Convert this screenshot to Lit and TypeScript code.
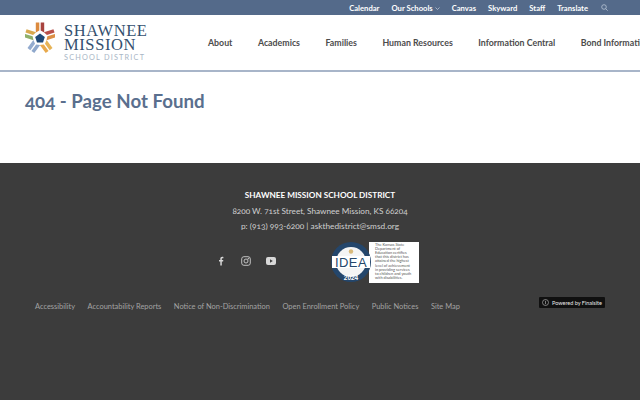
import { LitElement, html, css, svg } from "lit";
import { customElement } from "lit/decorators.js";

const arm = (rot: number, c1: string, c2: string) => svg`
  <g transform="rotate(${rot} 15 17)">
    <path d="M10.800 1.500H14.300V9.500L10.800 11.500z" fill=${c1}/>
    <path d="M15.700 1.500H19.200V11.500L15.700 9.500z" fill=${c2}/>
  </g>`;

@customElement("app-root")
export class AppRoot extends LitElement {
  static styles = css`
    :host { display: block; width: 640px; height: 400px; overflow: hidden; font-family: "Lato", "Open Sans", sans-serif; background: #fff; font-variant-numeric: oldstyle-nums; }
    .top { height: 15px; background: #546a8a; display: flex; justify-content: flex-end; align-items: center; padding-right: 32px; gap: 12px; color: #fff; font-size: 7.650px; font-weight: 700; }
    .top span { white-space: nowrap; }
    .chev { margin-left: 2px; vertical-align: 1px; }
    .search { margin-left: 1px; display: block; }
    .header { height: 55px; border-bottom: 2px solid #a8b5c9; display: flex; align-items: center; overflow: hidden; padding-left: 25px; }
    .logo { display: flex; gap: 9px; width: 183px; flex: none; align-items: flex-start; height: 55px; }
    .mark { margin-top: 6px; flex: none; }
    .wm { display: flex; flex-direction: column; font-family: "Liberation Serif", serif; color: #34506f; font-size: 16.500px; line-height: 13.500px; letter-spacing: .6px; padding-top: 9px; }
    .wm small { font-family: "Lato", sans-serif; font-size: 7.300px; letter-spacing: 1.200px; color: #a9b6c6; line-height: 10px; margin-top: 2px; white-space: nowrap; }
    nav { display: flex; gap: 25.500px; font-size: 8.800px; font-weight: 700; color: #4c4c4c; white-space: nowrap; }
    main { height: 91px; padding: 18px 25px 0; box-sizing: border-box; }
    h1 { margin: 0; font-size: 18.700px; line-height: 23px; font-weight: 700; color: #5a6f8e; }
    footer { height: 237px; background: #3c3c3c; color: #d0d0d0; position: relative; display: flex; flex-direction: column; align-items: center; padding-top: 26px; box-sizing: border-box; }
    .name { font-size: 8.200px; font-weight: 700; color: #fff; line-height: 12px; }
    .addr { font-size: 8.200px; line-height: 15px; margin-top: 3px; }
    .phone { font-size: 8.300px; line-height: 14px; }
    .mid { display: flex; align-items: center; align-self: flex-start; margin: 7px 0 0 216px; height: 44px; }
    .social { display: flex; gap: 15px; width: 115px; align-items: center; margin-top: -3px; }
    .badge { display: flex; align-items: center; }
    .disc { position: relative; z-index: 1; flex: none; }
    .note { width: 50px; height: 41px; background: #fff; color: #555; font-size: 3.900px; line-height: 4.200px; padding: 1px 5px 0 6px; box-sizing: border-box; margin-left: -2px; }
    .links { display: flex; align-self: flex-start; gap: 12.500px; margin: 17px 0 0 35px; font-size: 7.450px; color: #a3a3a3; white-space: nowrap; line-height: 12px; }
    .powered { position: absolute; left: 539px; top: 134px; width: 66px; height: 11px; background: #101010; border-radius: 1px; color: #e8e8e8; font-size: 5.500px; display: flex; align-items: center; gap: 3px; padding-left: 3px; box-sizing: border-box; white-space: nowrap; }
  `;

  render() {
    return html`
      <div class="top">
        <span>Calendar</span>
        <span>Our Schools<svg class="chev" width="5" height="3" viewBox="0 0 5 3"><path d="M.5.5 2.500 2.500 4.500.5" fill="none" stroke="#c8d2e0" stroke-width=".7"/></svg></span>
        <span>Canvas</span><span>Skyward</span><span>Staff</span><span>Translate</span>
        <svg class="search" width="7" height="7" viewBox="0 0 7 7"><circle cx="3" cy="3" r="2.300" fill="none" stroke="#b9c5d6" stroke-width=".8"/><path d="M4.700 4.700 6.700 6.700" stroke="#b9c5d6" stroke-width=".8"/></svg>
      </div>
      <div class="header">
        <div class="logo">
          <svg class="mark" width="30" height="33" viewBox="0 0 30 33">
            ${arm(0, "#dc8a3e", "#a8433f")}
            ${arm(72, "#b9504a", "#dc8f45")}
            ${arm(144, "#e6b356", "#e8a94c")}
            ${arm(216, "#8fa8cc", "#93abcf")}
            ${arm(288, "#8fb06a", "#d9a94e")}
            <path d="M15 12.500 19.800 16 18 21.500H12L10.200 16Z" fill="#1f4a78"/>
          </svg>
          <div class="wm"><span>SHAWNEE</span><span>MISSION</span><small>SCHOOL DISTRICT</small></div>
        </div>
        <nav><span>About</span><span>Academics</span><span>Families</span><span>Human Resources</span><span>Information Central</span><span>Bond Information</span></nav>
      </div>
      <main><h1>404 - Page Not Found</h1></main>
      <footer>
        <div class="name">SHAWNEE MISSION SCHOOL DISTRICT</div>
        <div class="addr">8200 W. 71st Street, Shawnee Mission, KS 66204</div>
        <div class="phone">p: (913) 993-6200 | askthedistrict@smsd.org</div>
        <div class="mid">
          <div class="social">
            <svg width="10" height="10" viewBox="0 0 10 10"><path d="M5.800 9.500V5.400h1.300l.2-1.500H5.800V3c0-.5.2-.8.8-.8h.8V.9C7.200.9 6.800.8 6.300.8 5.100.8 4.300 1.500 4.300 2.800v1.100H3v1.500h1.300v4.100z" fill="#d8d8d8"/></svg>
            <svg width="10" height="10" viewBox="0 0 10 10" fill="none" stroke="#cfcfcf" stroke-width=".9"><rect x=".7" y=".7" width="8.600" height="8.600" rx="2.200"/><circle cx="5" cy="5" r="2"/><circle cx="7.400" cy="2.600" r=".4" fill="#cfcfcf"/></svg>
            <svg width="10" height="8" viewBox="0 0 10 8"><rect width="10" height="8" rx="2" fill="#d8d8d8"/><path d="M4 2.300 6.800 4 4 5.700z" fill="#3c3c3c"/></svg>
          </div>
          <div class="badge">
            <svg class="disc" width="40" height="42" viewBox="0 0 40 42">
              <circle cx="20" cy="21" r="20" fill="#24466b"/>
              <circle cx="20" cy="21" r="15" fill="#f4f4f4"/>
              <rect x="1" y="15" width="38" height="12" fill="#fff"/>
              <text x="20" y="26" text-anchor="middle" font-family="Liberation Sans" font-size="13" letter-spacing=".4" fill="#24466b">IDEA</text>
              <text x="20" y="38.500" text-anchor="middle" font-family="Liberation Sans" font-size="6.500" font-weight="700" fill="#fff">2024</text>
              <circle cx="20" cy="10.500" r="2.200" fill="#d8b97a"/>
            </svg>
            <div class="note">The Kansas State Department of Education certifies that this district has attained the highest level of achievement in providing services to children and youth with disabilities.</div>
          </div>
        </div>
        <div class="links"><span>Accessibility</span><span>Accountability Reports</span><span>Notice of Non-Discrimination</span><span>Open Enrollment Policy</span><span>Public Notices</span><span>Site Map</span></div>
        <div class="powered"><svg width="7" height="7" viewBox="0 0 7 7"><circle cx="3.500" cy="3.500" r="3" fill="none" stroke="#aaa" stroke-width=".7"/><path d="M3.500 1.800V5.200" stroke="#aaa" stroke-width=".7"/></svg>Powered by Finalsite</div>
      </footer>
    `;
  }
}
